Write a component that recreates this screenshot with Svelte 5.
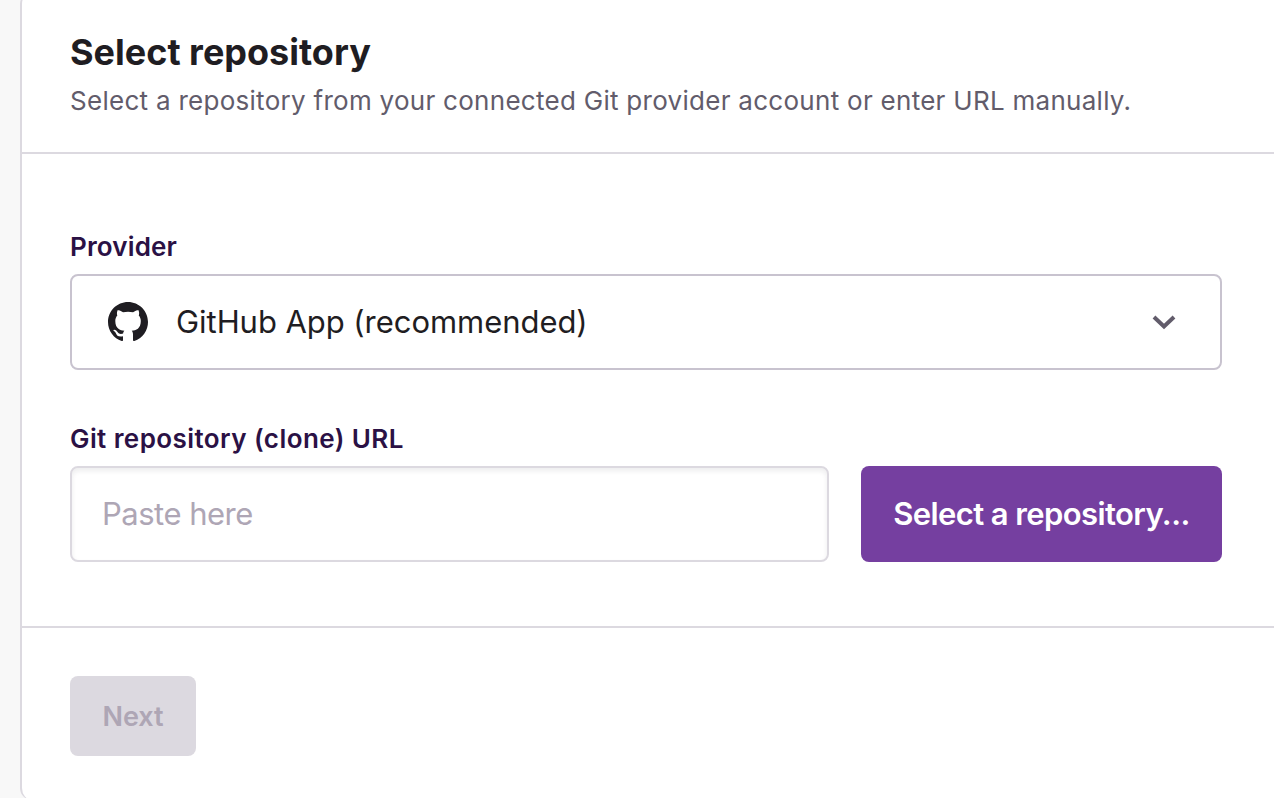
<script>
	let url = '';
</script>

<main class="page">
	<section class="card">
		<header class="head">
			<h1>Select repository</h1>
			<p>Select a repository from your connected Git provider account or enter URL manually.</p>
		</header>

		<div class="body">
			<div class="label">Provider</div>
			<div class="select">
				<svg class="gh" viewBox="0 0 16 16" fill="#1f1d22" aria-hidden="true">
					<path d="M8 0C3.58 0 0 3.58 0 8c0 3.54 2.29 6.53 5.47 7.59.4.07.55-.17.55-.38 0-.19-.01-.82-.01-1.49-2.01.37-2.53-.49-2.69-.94-.09-.23-.48-.94-.82-1.13-.28-.15-.68-.52-.01-.53.63-.01 1.08.58 1.23.82.72 1.21 1.87.87 2.33.66.07-.52.28-.87.51-1.07-1.78-.2-3.64-.89-3.64-3.95 0-.87.31-1.59.82-2.15-.08-.2-.36-1.02.08-2.12 0 0 .67-.21 2.2.82.64-.18 1.32-.27 2-.27.68 0 1.36.09 2 .27 1.53-1.04 2.2-.82 2.2-.82.44 1.1.16 1.92.08 2.12.51.56.82 1.27.82 2.15 0 3.07-1.87 3.75-3.65 3.95.29.25.54.73.54 1.48 0 1.07-.01 1.93-.01 2.2 0 .21.15.46.55.38A8.013 8.013 0 0 0 16 8c0-4.42-3.58-8-8-8z" />
				</svg>
				<span class="value">GitHub App (recommended)</span>
				<svg class="chev" viewBox="0 0 24 16" fill="none" stroke="#625c6b" stroke-width="4" aria-hidden="true">
					<path d="M2 3l10 9.4L22 3" />
				</svg>
			</div>

			<div class="label second">Git repository (clone) URL</div>
			<div class="row">
				<input type="text" placeholder="Paste here" bind:value={url} />
				<button class="primary">Select a repository...</button>
			</div>
		</div>

		<footer class="foot">
			<button class="next" disabled>Next</button>
		</footer>
	</section>
</main>

<style>
	:global(body) {
		margin: 0;
		background: #f8f8f8;
		font-family: Inter, "Noto Sans", sans-serif;
		overflow: hidden;
	}

	.page {
		height: 798px;
		padding-left: 20px;
		box-sizing: border-box;
		overflow: hidden;
	}

	/* the card runs a bit past the window, only its rounded left edge shows */
	.card {
		height: 808px;
		margin-top: -8px;
		box-sizing: border-box;
		background: #fff;
		border-left: 2px solid #dcd9e0;
		border-radius: 12px 0 0 12px;
	}

	.head {
		height: 162px;
		box-sizing: border-box;
		padding: 38px 0 0 48px;
		border-bottom: 2px solid #dcd9e0;
	}

	h1 {
		margin: 0;
		font-size: 36px;
		line-height: 44px;
		font-weight: 700;
		color: #1f1d22;
	}

	.head p {
		margin: 11px 0 0;
		font-size: 26px;
		line-height: 32px;
		color: #625c6b;
		letter-spacing: 0.28px;
	}

	.body {
		height: 474px;
		box-sizing: border-box;
		padding: 77px 52px 0 48px;
		border-bottom: 2px solid #dcd9e0;
	}

	.label {
		font-size: 26px;
		line-height: 32px;
		font-weight: 600;
		color: #2b1145;
		letter-spacing: 0.15px;
		margin-bottom: 11px;
	}

	.label.second {
		margin-top: 53px;
		letter-spacing: 0.42px;
	}

	.select {
		display: flex;
		align-items: center;
		height: 96px;
		box-sizing: border-box;
		padding: 0 44px 0 36px;
		border: 2px solid #c8c3cf;
		border-radius: 8px;
	}

	.gh {
		width: 40px;
		height: 40px;
		flex: none;
	}

	.value {
		flex: 1;
		margin-left: 28px;
		padding-bottom: 2px;
		font-size: 31px;
		color: #1f1d22;
		letter-spacing: -0.05px;
	}

	.chev {
		width: 24px;
		height: 16px;
		flex: none;
	}

	.row {
		display: flex;
		gap: 32px;
		height: 96px;
	}

	input {
		flex: 1;
		min-width: 0;
		box-sizing: border-box;
		padding: 0 30px 2px;
		border: 2px solid #dcd9e0;
		border-radius: 8px;
		font: inherit;
		font-size: 31px;
		letter-spacing: -0.5px;
		box-shadow: inset 0 3px 5px rgba(31, 29, 34, 0.08);
		outline: none;
	}

	input::placeholder {
		color: #aea6b5;
		opacity: 1;
	}

	button {
		font-family: inherit;
		border: none;
		border-radius: 8px;
		font-weight: 600;
	}

	.primary {
		width: 361px;
		background: #753fa0;
		color: #fff;
		font-size: 31px;
		letter-spacing: -0.6px;
		padding: 0 0 2px;
	}

	.foot {
		padding: 48px 0 0 48px;
	}

	.next {
		width: 126px;
		height: 80px;
		background: #dcd9e0;
		color: #aea6b5;
		font-size: 27px;
		padding: 0;
	}
</style>
